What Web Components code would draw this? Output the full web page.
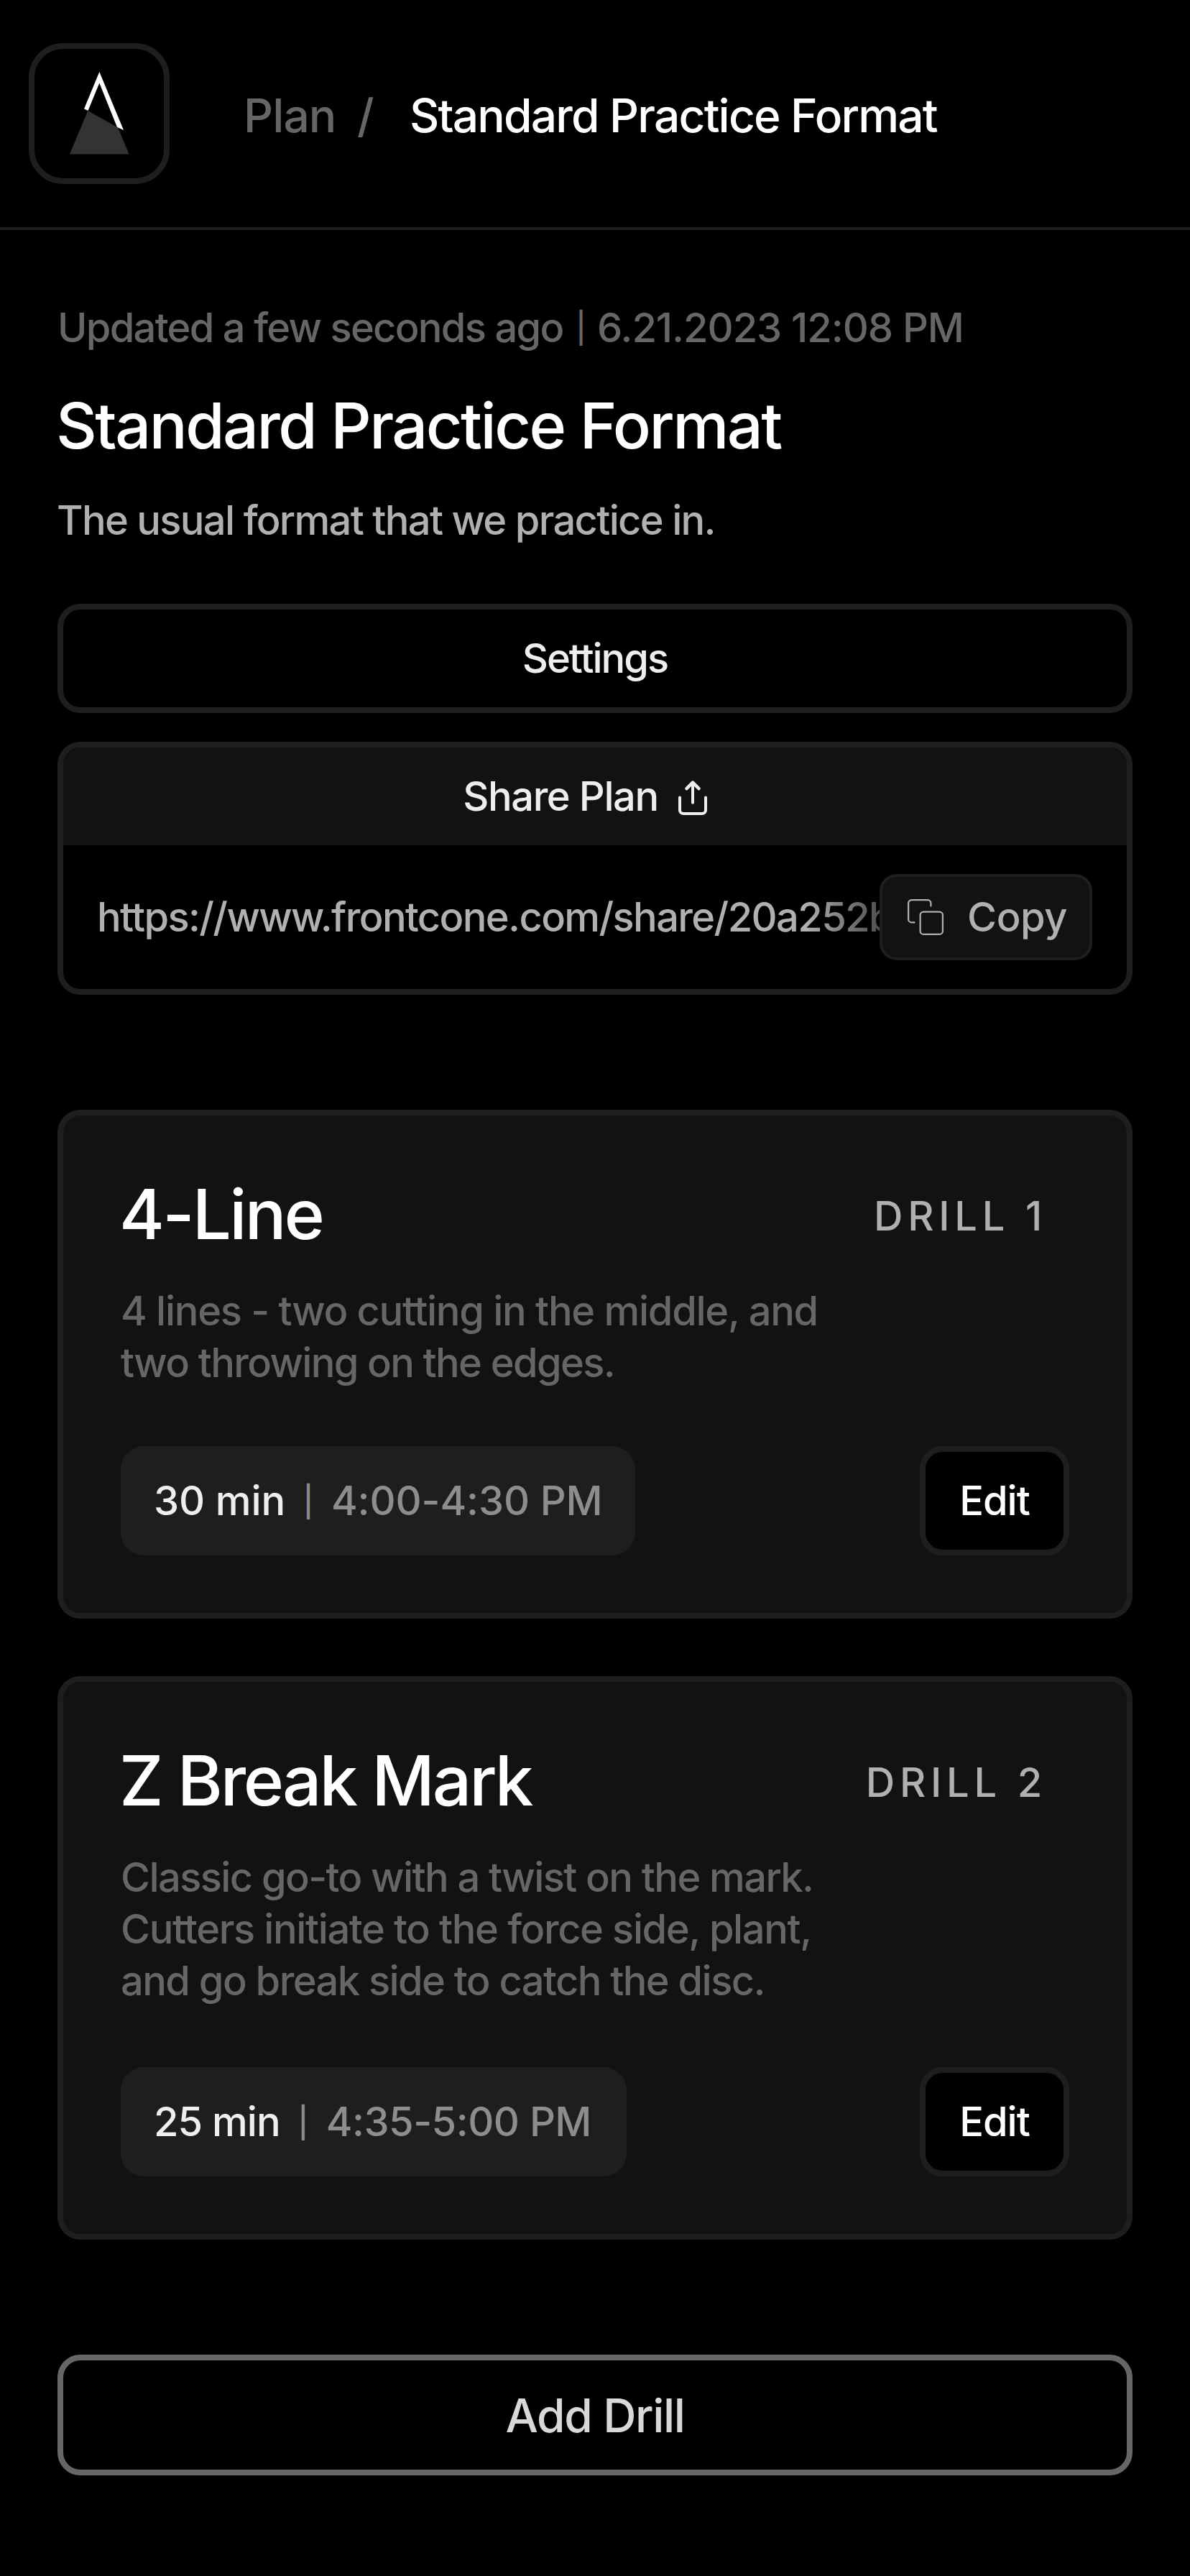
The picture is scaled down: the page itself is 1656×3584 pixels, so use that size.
<!DOCTYPE html>
<html lang="en">
<head>
<meta charset="utf-8">
<title>Standard Practice Format</title>
<style>
  body { margin: 0; background: #000; color: #fff; font-family: Inter, sans-serif; font-kerning: normal; }
</style>
</head>
<body>
<plan-page></plan-page>
<script>
const define = (name, html) => {
  const template = document.createElement('template');
  template.innerHTML = html;
  customElements.define(name, class extends HTMLElement {
    connectedCallback() {
      if (this.shadowRoot) return;
      this.attachShadow({ mode: 'open' }).append(template.content.cloneNode(true));
    }
  });
};

define('brand-logo', `
<style>
  :host { display: block; box-sizing: border-box; width: 196px; height: 196px; border: 8px solid #1e1e1e; border-radius: 48px; }
  svg { display: block; }
</style>
<svg width="180" height="180" viewBox="48 68 180 180">
  <path fill="#fff" d="M138.3 100 172 181 163 177 138.3 115.5 122.5 154 117 151.5Z"/>
  <path fill="#333" d="M122.3 154 164 177.5 179.7 214.5H97Z"/>
</svg>`);

define('page-header', `
<style>
  :host { display: flex; align-items: center; box-sizing: border-box; height: 320px; padding-left: 40px; border-bottom: 4px solid #1e1e1e; }
  nav { display: flex; margin-left: 103px; padding-top: 5px; font-size: 64px; line-height: 80px; font-weight: 500; white-space: nowrap; }
  .parent { width: 158px; color: #666; letter-spacing: -.9px; }
  .slash { width: 73px; color: #666; }
  .current { letter-spacing: -1.81px; }
</style>
<brand-logo></brand-logo>
<nav><span class="parent"><slot name="parent"></slot></span><span class="slash">/</span><span class="current"><slot></slot></span></nav>`);

define('plan-intro', `
<style>
  :host { display: block; white-space: nowrap; }
  .updated { display: flex; font-size: 56px; line-height: 72px; font-weight: 500; color: #666; letter-spacing: -1.03px; }
  .ago { width: 706px; letter-spacing: -1.7px; }
  .bar { width: 45px; font-size: 42px; letter-spacing: 0; text-align: center; }
  h1 { margin: 44px 0 0 -2px; font-size: 88px; line-height: 112px; font-weight: 500; letter-spacing: -2.5px; }
  p { margin: 40px 0 0 -1px; font-size: 56px; line-height: 72px; font-weight: 500; letter-spacing: -1.68px; color: #b0b0b0; }
</style>
<div class="updated"><span class="ago"><slot name="ago"></slot></span><span class="bar">|</span><span><slot name="date"></slot></span></div>
<h1><slot name="title"></slot></h1>
<p><slot name="summary"></slot></p>`);

define('outline-button', `
<style>
  :host { display: block; }
  button { display: flex; align-items: center; justify-content: center; box-sizing: border-box; width: 100%; height: var(--height, 152px);
    padding: 2px 0 0; border: 8px solid var(--line, #1e1e1e); border-radius: 32px; background: #000; color: var(--ink, #eee);
    font: 500 var(--size, 56px)/1.2 Inter, sans-serif; letter-spacing: var(--track, -1.97px); }
</style>
<button><slot></slot></button>`);

define('share-icon', `
<style>:host { display: block; width: 48px; height: 56px; } svg { display: block; }</style>
<svg width="48" height="56" viewBox="0 0 48 56" fill="none" stroke="#eee" stroke-width="4" stroke-linecap="round" stroke-linejoin="round">
  <path d="M24 36.7V9M6 29.5V47a5 5 0 0 0 5 5H37a5 5 0 0 0 5-5V29.5"/>
  <path stroke-width="4.6" d="M15.5 17.2 24 8.6 32.5 17.2"/>
</svg>`);

define('copy-button', `
<style>
  :host { display: block; }
  button { display: flex; align-items: center; box-sizing: border-box; width: 296px; height: 120px; padding: 0 0 0 35px;
    border: 4px solid #1e1e1e; border-radius: 24px; background: #121212; color: #b0b0b0; font: 500 56px/72px Inter, sans-serif; letter-spacing: -.42px; }
  svg { display: block; margin-right: 33px; }
</style>
<button>
  <svg width="50" height="50" viewBox="0 0 50 50" fill="none" stroke="#b0b0b0" stroke-width="2.2" stroke-linecap="round">
    <rect x="17.6" y="17.6" width="31.3" height="31.3" rx="4.5"/>
    <path d="M9.5 32.4H5.6a4.5 4.5 0 0 1-4.5-4.5V5.6a4.5 4.5 0 0 1 4.5-4.5H27.9a4.5 4.5 0 0 1 4.5 4.5V9.5"/>
  </svg>
  <slot></slot>
</button>`);

define('share-panel', `
<style>
  :host { display: block; box-sizing: border-box; border: 8px solid #1e1e1e; border-radius: 32px; overflow: hidden; }
  .head { display: flex; align-items: center; justify-content: center; gap: 24px; height: 136px; padding-right: 24px;
    background: #121212; color: #eee; font-size: 56px; font-weight: 500; letter-spacing: -1.4px; }
  .body { display: flex; align-items: center; height: 200px; padding: 0 48px 0 47px; }
  .url { flex: 1; min-width: 0; overflow: hidden; white-space: nowrap; color: #b0b0b0; font-size: 56px; line-height: 72px; font-weight: 500;
    letter-spacing: -1.62px; -webkit-mask-image: linear-gradient(90deg, #000 calc(100% - 104px), rgba(0,0,0,.45)); mask-image: linear-gradient(90deg, #000 calc(100% - 104px), rgba(0,0,0,.45)); }
</style>
<div class="head"><span>Share Plan</span><share-icon></share-icon></div>
<div class="body"><div class="url"><slot></slot></div><copy-button>Copy</copy-button></div>`);

define('time-chip', `
<style>
  :host { display: flex; align-items: center; box-sizing: border-box; width: var(--width); height: 152px; padding-left: 46px; border-radius: 32px; background: #1e1e1e; font-size: 56px; font-weight: 500; white-space: nowrap; color: #8d8d8d; }
  .len { color: #eee; letter-spacing: var(--len-track, 0); }
  .bar { width: 64px; font-size: 42px; text-align: center; }
  .span { letter-spacing: var(--span-track, 0); }
</style>
<span class="len"><slot name="length"></slot></span><span class="bar">|</span><span class="span"><slot></slot></span>`);

define('drill-card', `
<style>
  :host { display: block; box-sizing: border-box; padding: 80px; border: 8px solid #1e1e1e; border-radius: 32px; background: #121212; }
  header, footer { display: flex; align-items: center; justify-content: space-between; }
  h2 { margin: 0 0 0 -2px; font-size: 96px; line-height: 114px; font-weight: 500; letter-spacing: var(--title-track); white-space: nowrap; }
  .number { padding: 5px 31px 0 0; font-size: 56px; line-height: 72px; font-weight: 500; letter-spacing: 6.8px; color: #b0b0b0; white-space: nowrap; }
  .text { margin: 42px 0 var(--text-gap, 80px); font-size: 56px; line-height: 72px; font-weight: 500; color: #666; }
  outline-button { width: 208px; --ink: #fff; --track: -.96px; }
</style>
<header><h2><slot name="title"></slot></h2><div class="number"><slot name="number"></slot></div></header>
<div class="text"><slot name="text"></slot></div>
<footer><slot name="time"></slot><outline-button>Edit</outline-button></footer>`);

define('plan-page', `
<style>
  :host { display: block; box-sizing: border-box; min-height: 3584px; background: #000; }
  main { display: flex; flex-direction: column; padding: 100px 80px 140px; }
  .settings { margin: 80px 0 40px; }
  .drills { display: flex; flex-direction: column; gap: 80px; margin: 160px 0; }
  .line { display: block; white-space: nowrap; }
  .add { --height: 168px; --size: 64px; --line: #666; --ink: #d8d8d8; --track: -1.38px; }
</style>
<page-header><span slot="parent">Plan</span>Standard Practice Format</page-header>
<main>
  <plan-intro>
    <span slot="ago">Updated a few seconds ago</span>
    <span slot="date">6.21.2023 12:08 PM</span>
    <span slot="title">Standard Practice Format</span>
    <span slot="summary">The usual format that we practice in.</span>
  </plan-intro>
  <outline-button class="settings">Settings</outline-button>
  <share-panel>https://www.frontcone.com/share/20a252b</share-panel>
  <div class="drills">
    <drill-card style="--title-track:-2.8px">
      <span slot="title">4-Line</span><span slot="number">DRILL 1</span>
      <span slot="text" class="line" style="letter-spacing:-1.29px">4 lines - two cutting in the middle, and</span>
      <span slot="text" class="line" style="letter-spacing:-1.64px">two throwing on the edges.</span>
      <time-chip slot="time" style="--width:716px;--len-track:-.13px;--span-track:-.1px"><span slot="length">30 min</span>4:00-4:30 PM</time-chip>
    </drill-card>
    <drill-card style="--title-track:-3.15px;--text-gap:84px">
      <span slot="title">Z Break Mark</span><span slot="number">DRILL 2</span>
      <span slot="text" class="line" style="letter-spacing:-1.59px">Classic go-to with a twist on the mark.</span>
      <span slot="text" class="line" style="letter-spacing:-1.39px">Cutters initiate to the force side, plant,</span>
      <span slot="text" class="line" style="letter-spacing:-1.56px">and go break side to catch the disc.</span>
      <time-chip slot="time" style="--width:704px;--len-track:-.98px;--span-track:-.5px"><span slot="length">25 min</span>4:35-5:00 PM</time-chip>
    </drill-card>
  </div>
  <outline-button class="add">Add Drill</outline-button>
</main>`);
</script>
</body>
</html>
